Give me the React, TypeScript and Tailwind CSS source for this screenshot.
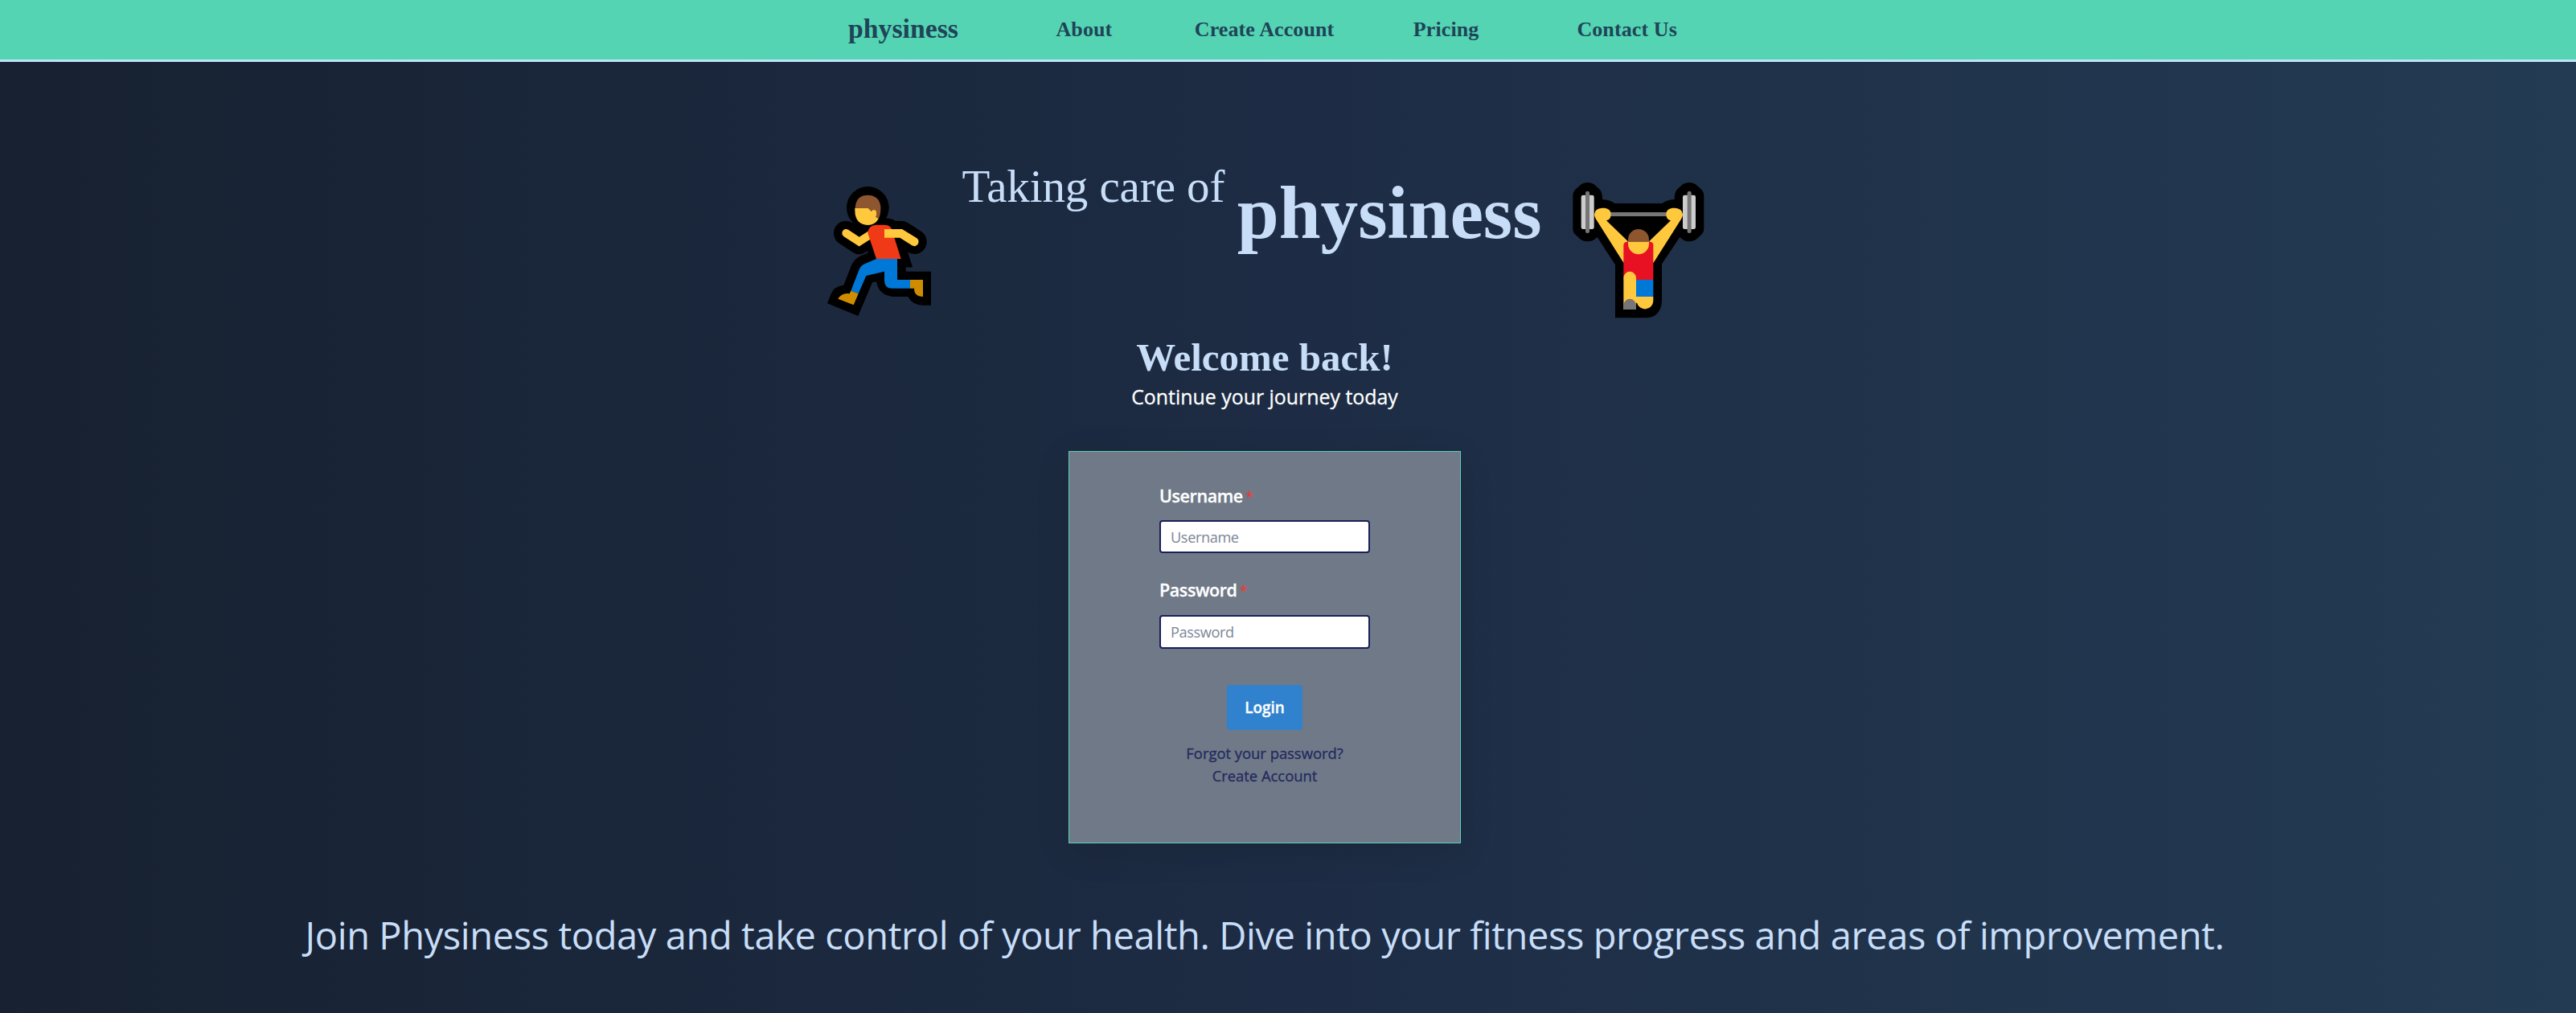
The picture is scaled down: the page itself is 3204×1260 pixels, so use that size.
const navLinks = [
  { label: "About", spacing: "ml-[121.5px]" },
  { label: "Create Account", spacing: "ml-[102.5px]" },
  { label: "Pricing", spacing: "ml-[98.5px]" },
  { label: "Contact Us", spacing: "ml-[122px]" },
];

function Runner() {
  return (
    <svg viewBox="0 0 510 600" className="mt-5 h-[200px] w-[170px] shrink-0" aria-hidden="true">
      <g stroke="#000" strokeLinecap="round" strokeLinejoin="round" fill="none" strokeWidth="92">
        <path d="M127 240 L176 272 L225 240" />
        <path d="M270 240 H332 L382 272" />
      </g>
      <circle cx="208" cy="145" r="79" />
      <path d="M240 215 H270 Q292 215 297 224 L332 336 H240Z" stroke="#000" strokeWidth="62" />
      <path d="M215 300 L205 316 L190 321 Q160 332 148 358 L118 434 Q80 437 68 474 L57 502 L172 549 L225 424 L240 421 Q248 470 300 477 H358 Q374 508 414 509 H444 V383 H350 V367 H375 L350 290Z" />
      <path d="M127 240 L176 272 L218 245" fill="none" stroke="#ffc83d" strokeWidth="30" strokeLinecap="round" />
      <path d="M208 240 Q210 210 240 209 H272 Q291 210 297 224 L332 336 H240Z" fill="#f03a17" />
      <path d="M270 225 H336 L390 258 A16 16 0 0 1 373 286 L328 257 H270Z" fill="#ffc83d" />
      <path d="M161 150 Q162 98 208 98 Q256 100 256 148 Q256 172 248 187 L225 180Z" fill="#8e562e" />
      <path d="M160 147 H209 L222 160 Q224 153 232 153 Q241 154 240 166 Q241 174 237 179 L248 187 Q235 210 208 210 Q160 207 160 155Z" fill="#ffc83d" />
      <path d="M240 336 H318 V414 H366 V446 H296 Q270 444 270 416 V383 L202 399 L173 466 L145 455 L176 376 Q181 362 193 356Z" fill="#0078d7" />
      <path d="M366 414 H414 V477 Q381 476 381 446 H366Z" fill="#d08c00" />
      <path d="M145 455 L173 466 L155 508 L97 485 Q112 461 140 466Z" fill="#d08c00" />
    </svg>
  );
}

function Weightlifter() {
  return (
    <svg viewBox="0 0 600 600" className="mt-5 ml-[22.5px] size-[200px] shrink-0" aria-hidden="true">
      <path d="M104 51 Q121 51 133 62 L148 76 Q159 86 159 114 Q188 115 205 129 H382 Q400 115 428 114 Q428 86 439 76 L454 62 Q466 51 483 51 Q500 51 512 62 L527 76 Q538 86 538 101 V222 Q538 238 526 248 L512 261 Q500 271 483 271 Q466 271 454 260 L448 255 L381 355 V492 Q378 552 325 556 H207 V358 L140 255 L133 261 Q121 271 104 271 Q87 271 75 261 L60 247 Q49 238 49 222 V101 Q49 86 60 76 L75 62 Q87 51 104 51Z" />
      <rect x="180" y="162" width="230" height="15" fill="#767676" />
      <rect x="80" y="98" width="48" height="127" rx="7" fill="#ccc" />
      <rect x="96" y="83" width="15" height="157" rx="7.5" fill="#767676" />
      <rect x="459" y="98" width="48" height="127" rx="7" fill="#ccc" />
      <rect x="476" y="83" width="15" height="157" rx="7.5" fill="#767676" />
      <g fill="#ffc83d">
        <path d="M129 170 Q131 147 158 146 H168 Q191 149 191 170 Q190 190 174 193 L254 270 V350 H238 L134 186 Q129 178 129 170Z" />
        <path d="M459 170 Q457 147 430 146 H420 Q397 149 397 170 Q398 190 414 193 L334 270 V350 H350 L454 186 Q459 178 459 170Z" />
      </g>
      <path d="M250 272 H338 Q349 273 349 285 V414 H238 V285 Q239 273 250 272Z" fill="#e81123" />
      <path d="M255 272 V264 A39 39 0 0 1 333 264 V272Z" fill="#8e562e" />
      <path d="M255 272 V280 A39 39 0 0 0 333 280 V272Z" fill="#ffc83d" />
      <rect x="285" y="414" width="64" height="63" fill="#0078d7" />
      <path d="M285 477 H349 V493 A31 31 0 0 1 288 500 H285Z" fill="#ffc83d" />
      <path d="M238 525 V407 A23.5 23.5 0 0 1 285 407 V525Z" fill="#ffc83d" />
      <path d="M238 525 V509 A23.5 23.5 0 0 1 285 509 V525Z" fill="#767676" />
    </svg>
  );
}

function FieldLabel({ htmlFor, children }: { htmlFor: string; children: string }) {
  return (
    <label htmlFor={htmlFor} className="flex h-[30px] items-start self-stretch text-[21.5px] leading-[30px] font-semibold tracking-[-0.42px] text-white [-webkit-text-stroke:0.3px]">
      {children}
      <span className="ml-1 text-[16px] leading-[30px] text-[#e53e3e]">*</span>
    </label>
  );
}

const inputClass =
  "w-[262px] rounded-[4px] border-2 border-[#1a2059] bg-white pl-[12px] text-[18.2px] tracking-[-0.4px] text-[#1a2059] placeholder:text-[#7b8698] outline-none";

export default function App() {
  return (
    <div className="h-[1260px] w-[3204px] overflow-hidden bg-linear-to-r from-[#172131] via-[#1d2c44] to-[#233b53] font-['Open_Sans',sans-serif]">
      <nav className="flex h-[77px] items-center border-b-[3px] border-[#bee3f8] bg-[#55d4b4] pb-px pl-[1055px] font-['Liberation_Serif',serif] font-bold text-[#1e4456]">
        <a className="pb-px text-[33.76px] leading-10">physiness</a>
        {navLinks.map((link) => (
          <a key={link.label} className={`text-[26px] leading-8 tracking-[0.1px] whitespace-nowrap ${link.spacing}`}>
            {link.label}
          </a>
        ))}
      </nav>

      <main className="flex w-[3146px] flex-col items-center pt-[113px]">
        <header className="flex h-[220px] items-start self-start pl-[1010px] font-['Liberation_Serif',serif] whitespace-nowrap text-[#c8def8]">
          <Runner />
          <span className="mt-3 ml-[16.4px] w-[342.4px] text-[57px] leading-[60px] tracking-[-0.1px]">Taking care of</span>
          <h1 className="mt-[25px] text-[93.34px] leading-[100px] font-bold">physiness</h1>
          <Weightlifter />
        </header>

        <h2 className="mt-[5px] font-['Liberation_Serif',serif] text-[48.96px] leading-[59px] font-bold text-[#c8def8]">Welcome back!</h2>
        <p className="text-[24.9px] leading-[38px] font-medium text-white [-webkit-text-stroke:0.3px]">Continue your journey today</p>

        <form className="mt-[49px] flex size-[488px] flex-col items-center border border-[#5fcfb6] bg-[#6f7987] pt-10 shadow-[0_10px_40px_rgba(0,0,0,0.12)]">
          <div className="flex flex-col">
            <FieldLabel htmlFor="username">Username</FieldLabel>
            <input id="username" placeholder="Username" className={`mt-[15px] h-[41px] ${inputClass}`} />
          </div>
          <div className="mt-[31px] flex flex-col">
            <FieldLabel htmlFor="password">Password</FieldLabel>
            <input id="password" type="password" placeholder="Password" className={`mt-4 h-[42px] ${inputClass}`} />
          </div>
          <button type="button" className="mt-[45px] h-14 w-[94px] rounded-[4px] bg-[#3182ce] text-[18.9px] font-semibold text-white [-webkit-text-stroke:0.3px]">
            Login
          </button>
          <div className="mt-[15px] flex flex-col items-center text-[18.4px] leading-7 font-medium text-[#232a5f] [-webkit-text-stroke:0.3px]">
            <a>Forgot your password?</a>
            <a>Create Account</a>
          </div>
        </form>

        <p className="mt-[78px] text-[47px] leading-[72px] tracking-[-0.4px] whitespace-nowrap text-[#c8def8]">
          Join Physiness today and take control of your health. Dive into your fitness progress and areas of improvement.
        </p>
      </main>
    </div>
  );
}
